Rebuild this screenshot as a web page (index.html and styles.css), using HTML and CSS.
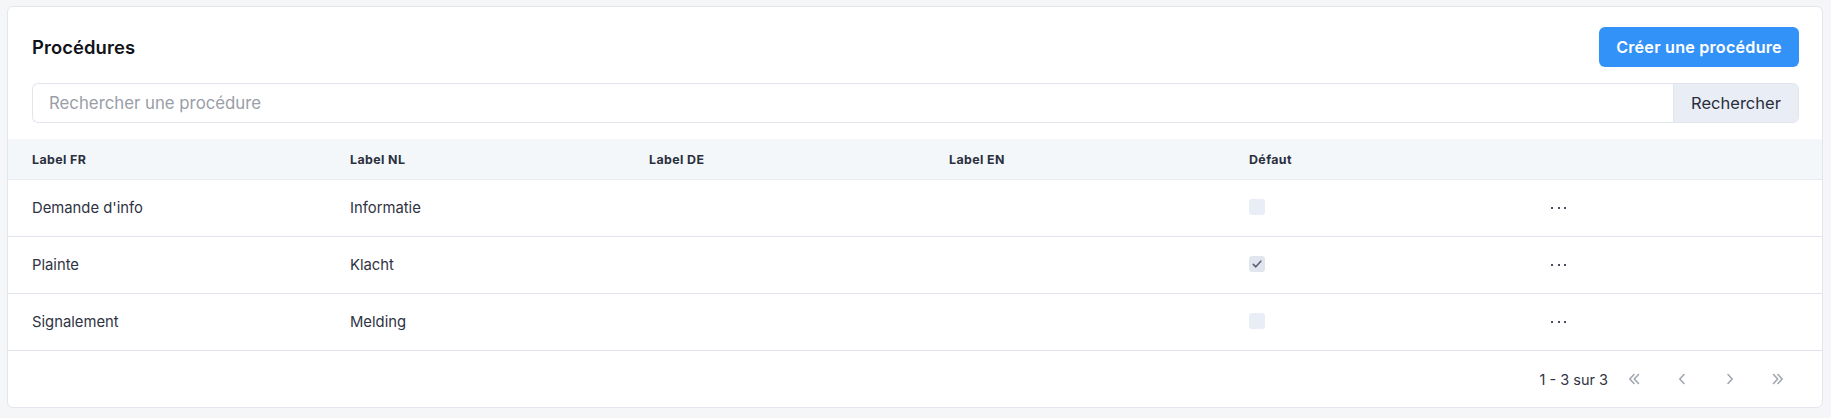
FILE: index.html
```html
<!DOCTYPE html>
<html lang="fr">
<head>
<meta charset="utf-8">
<title>Procédures</title>
<link rel="stylesheet" href="styles.css">
</head>
<body>
<div class="page">
  <section class="card">
    <div class="card-head">
      <div class="title-row">
        <h1 class="title">Procédures</h1>
        <button class="btn-primary">Créer une procédure</button>
      </div>
      <div class="search">
        <input class="search-input" type="text" placeholder="Rechercher une procédure">
        <button class="search-btn">Rechercher</button>
      </div>
    </div>
    <div class="table">
      <div class="row head">
        <div class="cell">Label FR</div>
        <div class="cell">Label NL</div>
        <div class="cell">Label DE</div>
        <div class="cell">Label EN</div>
        <div class="cell">Défaut</div>
        <div class="cell"></div>
      </div>
      <div class="row">
        <div class="cell">Demande d'info</div>
        <div class="cell">Informatie</div>
        <div class="cell"></div>
        <div class="cell"></div>
        <div class="cell"><span class="check"></span></div>
        <div class="cell"><span class="dots"><i></i><i></i><i></i></span></div>
      </div>
      <div class="row">
        <div class="cell">Plainte</div>
        <div class="cell">Klacht</div>
        <div class="cell"></div>
        <div class="cell"></div>
        <div class="cell"><span class="check checked"><svg width="12" height="12" viewBox="0 0 12 12"><path d="M2.3 6.4 L4.8 8.8 L9.8 3.2" fill="none" stroke="#5b6275" stroke-width="1.6" stroke-linecap="round" stroke-linejoin="round"/></svg></span></div>
        <div class="cell"><span class="dots"><i></i><i></i><i></i></span></div>
      </div>
      <div class="row">
        <div class="cell">Signalement</div>
        <div class="cell">Melding</div>
        <div class="cell"></div>
        <div class="cell"></div>
        <div class="cell"><span class="check"></span></div>
        <div class="cell"><span class="dots"><i></i><i></i><i></i></span></div>
      </div>
    </div>
    <div class="pager">
      <span class="pager-info">1 - 3 sur 3</span>
      <button class="pg"><svg width="16" height="16" viewBox="0 0 16 16"><path d="M8 3.5 L3.8 8 L8 12.5 M12.5 3.5 L8.3 8 L12.5 12.5" fill="none" stroke="#a2a6b0" stroke-width="1.6" stroke-linecap="round" stroke-linejoin="round"/></svg></button>
      <button class="pg"><svg width="16" height="16" viewBox="0 0 16 16"><path d="M10 3.5 L5.8 8 L10 12.5" fill="none" stroke="#a2a6b0" stroke-width="1.6" stroke-linecap="round" stroke-linejoin="round"/></svg></button>
      <button class="pg"><svg width="16" height="16" viewBox="0 0 16 16"><path d="M6 3.5 L10.2 8 L6 12.5" fill="none" stroke="#a2a6b0" stroke-width="1.6" stroke-linecap="round" stroke-linejoin="round"/></svg></button>
      <button class="pg"><svg width="16" height="16" viewBox="0 0 16 16"><path d="M3.5 3.5 L7.7 8 L3.5 12.5 M8 3.5 L12.2 8 L8 12.5" fill="none" stroke="#a2a6b0" stroke-width="1.6" stroke-linecap="round" stroke-linejoin="round"/></svg></button>
    </div>
  </section>
</div>
</body>
</html>
```
FILE: styles.css
```css
* { box-sizing: border-box; }
html, body { margin: 0; padding: 0; }
body {
  background: #f5f6f8;
  font-family: Inter, "Noto Sans", sans-serif;
  color: #2f3343;
  width: 1831px;
  height: 418px;
  overflow: hidden;
}
.page {
  padding: 6px 8px 0 7px;
}
.card {
  background: #fff;
  border: 1px solid #e3e6ec;
  border-radius: 6px;
  overflow: hidden;
}
.card-head {
  padding: 20px 23px 16px 24px;
  display: flex;
  flex-direction: column;
  gap: 16px;
}
.title-row {
  display: flex;
  align-items: center;
  justify-content: space-between;
}
.title {
  margin: 0;
  font-size: 18.4px;
  font-weight: 600;
  color: #111318;
  letter-spacing: 0.1px;
}
.btn-primary {
  height: 40px;
  width: 200px;
  border: 0;
  border-radius: 6px;
  background: #3392f8;
  color: #fff;
  font-family: inherit;
  font-size: 16.2px;
  font-weight: 600;
  letter-spacing: 0.2px;
}
.search {
  display: flex;
  height: 40px;
}
.search-input {
  flex: 1;
  border: 1px solid #e2e5ec;
  border-right: 0;
  border-radius: 6px 0 0 6px;
  padding: 0 16px;
  font-family: inherit;
  font-size: 16.8px;
  color: #2f3343;
  outline: none;
}
.search-input::placeholder { color: #9a9ea8; }
.search-btn {
  width: 126px;
  border: 1px solid #e2e5ec;
  border-radius: 0 6px 6px 0;
  background: #e9edf5;
  font-family: inherit;
  font-size: 16.5px;
  color: #2a2e3b;
}
.row {
  display: grid;
  grid-template-columns: 318px 299px 300px 300px 299px 1fr;
  height: 57px;
  align-items: center;
  border-bottom: 1px solid #e3e4ee;
}
.row .cell { padding-left: 24px; font-size: 14.8px; }
.row.head {
  height: 41px;
  background: #f4f7fa;
  border-bottom: 1px solid #e8ebf0;
}
.row.head .cell {
  font-size: 12.4px;
  font-weight: 700;
  color: #2b3040;
  letter-spacing: 0.4px;
}
.check {
  display: flex;
  align-items: center;
  justify-content: center;
  width: 16px;
  height: 16px;
  border-radius: 3px;
  background: #e9edf5;
  margin-top: -2px;
}
.check.checked { background: #e1e5ee; }
.dots {
  display: flex;
  gap: 4.5px;
  padding-left: 3px;
  margin-top: -1px;
}
.dots i {
  display: block;
  width: 2px;
  height: 2px;
  background: #4a4f60;
}
.pager {
  height: 56px;
  display: flex;
  align-items: center;
  justify-content: flex-end;
  padding-right: 20px;
}
.pager-info {
  font-size: 14.5px;
  color: #2f3343;
  margin-right: 2px;
}
.pg {
  width: 48px;
  height: 32px;
  border: 0;
  background: transparent;
  padding: 0;
  display: flex;
  align-items: center;
  justify-content: center;
}
```
